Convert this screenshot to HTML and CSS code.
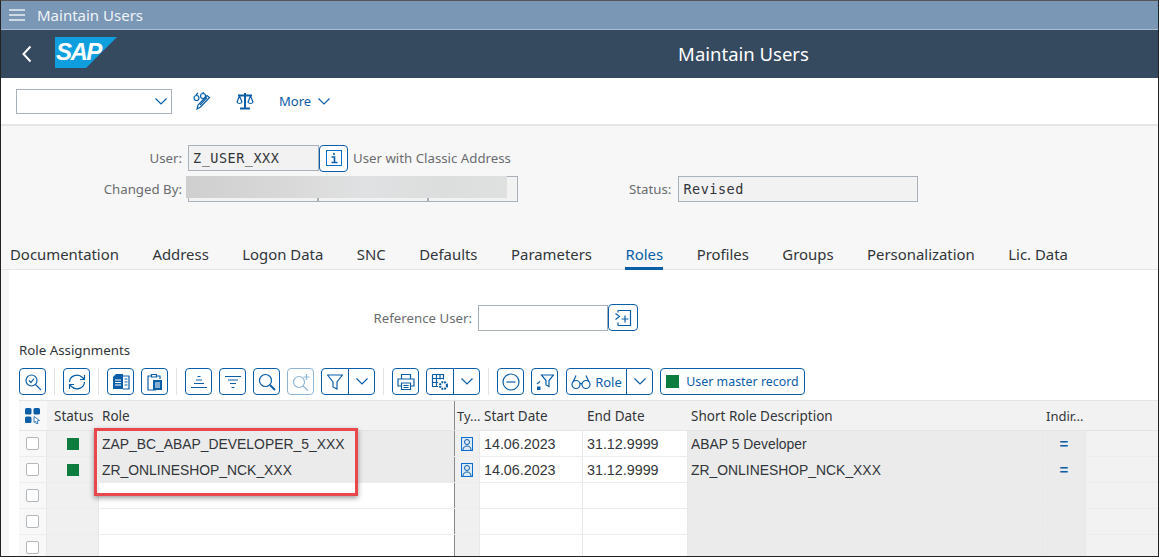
FILE: index.html
```html
<!DOCTYPE html>
<html lang="en">

<head>
    <meta charset="UTF-8">
    <title>Maintain Users</title>
    <link rel="stylesheet" href="styles.css">
</head>

<body>
    <div class="shell-bar">
        <svg class="menu-icon" width="16" height="12" viewBox="0 0 16 12"><path d="M0 1h16M0 6h16M0 11h16" stroke="#fff" stroke-width="1.5" opacity=".85"/></svg>
        <span>Maintain Users</span>
    </div>

    <div class="app-header">
        <svg class="back-icon" width="12" height="18" viewBox="0 0 12 18"><path d="M9.500 1.500 2.500 9l7 7.500" fill="none" stroke="#fff" stroke-width="2"/></svg>
        <div class="sap-logo"><span>SAP</span></div>
        <div class="app-title">Maintain Users</div>
    </div>

    <div class="action-bar">
        <div class="combo">
            <svg width="12" height="7" viewBox="0 0 12 7"><path d="M.5.500 6 6l5.500-5.500" class="line"/></svg>
        </div>
        <svg class="action-icon first" width="18" height="18" viewBox="0 0 18 18"><circle cx="3.500" cy="6" r="2.500" class="line"/><circle cx="10" cy="4" r="2.500" class="line"/><path d="M3 3 5 1M9 1.500 11 .5" class="line"/><path d="M16.500 5.500 7.500 15 4 17l1-4 9-9.500z" class="line"/><path d="M14 5.500 7 13" class="line"/></svg>
        <svg class="action-icon" width="18" height="18" viewBox="0 0 18 18"><path d="M9 1v15" class="line heavy"/><path d="M4 16.500h10M2 3.500h14" class="line heavy"/><path d="M3.500 4 1 10c1 2 4 2 5 0zM14.500 4 12 10c1 2 4 2 5 0z" class="line"/></svg>
        <span class="more">More</span>
        <svg width="12" height="7" viewBox="0 0 12 7"><path d="M.5.500 6 6l5.500-5.500" class="line"/></svg>
    </div>

    <div class="object-header">
        <div class="form-row">
            <label class="form-label">User:</label>
            <div class="field mono user-field">Z_USER_XXX</div>
            <button class="btn info-btn"><svg width="16" height="16" viewBox="0 0 16 16"><rect x=".5" y=".5" width="15" height="15" fill="#fff" stroke="#0a6ed1"/><path d="M8 3v2M5.500 7H8.500v5.500M5.500 12.500h6" stroke="#0a5ea8" stroke-width="1.600" fill="none"/></svg></button>
            <span class="form-label note">User with Classic Address</span>
        </div>
        <div class="form-row second">
            <label class="form-label">Changed By:</label>
            <div class="field changed-a"></div>
            <div class="field changed-b"></div>
            <div class="field changed-c"></div>
            <label class="form-label status-label">Status:</label>
            <div class="field mono status-field">Revised</div>
        </div>
        <div class="blur-box"></div>
    </div>

    <div class="tabs">
        <span>Documentation</span>
        <span>Address</span>
        <span>Logon Data</span>
        <span>SNC</span>
        <span>Defaults</span>
        <span>Parameters</span>
        <span class="tab-active">Roles</span>
        <span>Profiles</span>
        <span>Groups</span>
        <span>Personalization</span>
        <span>Lic. Data</span>
    </div>

    <div class="content">
        <div class="ref-row">
            <label class="form-label">Reference User:</label>
            <div class="field ref-field"></div>
            <button class="btn ref-btn"><svg width="18" height="18" viewBox="0 0 18 18"><path d="M4 1.500h12.500v15H4M4 16.500v-3M4 1.500v2M1.500 4.500l4 3-4 3M7.500 10h7M11 6.500v7" class="line"/></svg></button>
        </div>

        <div class="section-title">Role Assignments</div>

        <div class="toolbar">
            <button class="btn tool"><svg width="18" height="18" viewBox="0 0 18 18"><circle cx="7.500" cy="7.500" r="5.500" class="line"/><path d="M11.500 11.500 17 17M5 7.500 7 9.500 10 5.500" class="line"/></svg></button>
            <i class="sep"></i>
            <button class="btn tool"><svg width="20" height="18" viewBox="0 0 20 18"><path d="M2.500 9a7.500 7 0 0 1 13-4.500L17 6M17.500 9a7.500 7 0 0 1-13 4.500L3 12M17.500 2v4.500H13M2.500 16v-4.500H7" class="line"/></svg></button>
            <i class="sep"></i>
            <button class="btn tool"><svg width="18" height="18" viewBox="0 0 18 18"><path d="M11 3h6v13h-6" class="line"/><path d="M1 4l3-3h7v15H1z" fill="#0a5ea8"/><path d="M3 7h6M3 9.500h6M3 12h6" stroke="#fff"/><path d="M12.500 6h3M12.500 9h3M12.500 12h3" class="line"/></svg></button>
            <button class="btn tool"><svg width="18" height="18" viewBox="0 0 18 18"><path d="M5 3H2v14h8M11 3h3v3M5.500 1.500h5V4h-5z" class="line"/><path d="M7 7h9v10H7z" fill="#0a5ea8"/><path d="M9 10h5M9 12h5M9 14h5" stroke="#fff"/></svg></button>
            <i class="sep"></i>
            <button class="btn tool"><svg width="18" height="14" viewBox="0 0 18 14"><path d="M7.500 1.500h3M6 5h6M4 8.500h10M1 12.500h16" class="line"/></svg></button>
            <button class="btn tool"><svg width="18" height="14" viewBox="0 0 18 14"><path d="M1 1.500h16M4 5h10M6 8.500h6M7.500 12.500h3" class="line"/></svg></button>
            <button class="btn tool"><svg width="18" height="18" viewBox="0 0 18 18"><circle cx="7.500" cy="7.500" r="6" class="line"/><path d="M12 12l5 5" class="line heavy"/></svg></button>
            <button class="btn tool off"><svg width="18" height="18" viewBox="0 0 18 18"><circle cx="7" cy="9" r="5.500" class="line"/><path d="M11 13l5 4.500M14.500 1v6M11.500 4h6" class="line"/></svg></button>
            <div class="split">
                <button class="btn-part square"><svg width="16" height="16" viewBox="0 0 16 16"><path d="M.5 1h15L10 8v7l-4-2V8z" class="line"/></svg></button>
                <button class="btn-part arrow"><svg width="12" height="7" viewBox="0 0 12 7"><path d="M.5.500 6 6l5.500-5.500" class="line"/></svg></button>
            </div>
            <i class="sep"></i>
            <button class="btn tool"><svg width="18" height="18" viewBox="0 0 18 18"><path d="M4.500 6V1.500h9V6M4 13H1V6h16v7h-3M4.500 10h9v6.500h-9zM6.500 12.500h5M6.500 14.500h5" class="line"/></svg></button>
            <div class="split">
                <button class="btn-part square"><svg width="18" height="18" viewBox="0 0 18 18"><path d="M1.500 1.500h11v5M1.500 1.500v12H7M1.500 5.500H12M1.500 9.500H7M5.500 1.500v12M9 1.500v5" class="line"/><circle cx="12.500" cy="12.500" r="3.500" fill="none" stroke="#0a5ea8" stroke-width="2.200" stroke-dasharray="1.800 1"/></svg></button>
                <button class="btn-part arrow"><svg width="12" height="7" viewBox="0 0 12 7"><path d="M.5.500 6 6l5.500-5.500" class="line"/></svg></button>
            </div>
            <i class="sep"></i>
            <button class="btn tool"><svg width="18" height="18" viewBox="0 0 18 18"><circle cx="9" cy="9" r="8" class="line"/><path d="M4.500 9h9" class="line"/></svg></button>
            <button class="btn tool"><svg width="18" height="18" viewBox="0 0 18 18"><path d="M5.500 2h12l-4.500 5.500v6l-3-1.500V7.500z" class="line"/><path d="M1 11l3-2.500" class="line"/><path d="M1 13.500h3.500V17H1z" fill="#0a5ea8"/></svg></button>
            <div class="split role-split">
                <button class="btn-part role-part"><svg width="20" height="16" viewBox="0 0 20 16"><circle cx="5" cy="10.500" r="4" class="line"/><circle cx="15" cy="10.500" r="4" class="line"/><path d="M2 8l3-6.500M18 8l-3-6.500M9 10c1-1 1-1 2 0" class="line"/></svg><span>Role</span></button>
                <button class="btn-part arrow"><svg width="12" height="7" viewBox="0 0 12 7"><path d="M.5.500 6 6l5.500-5.500" class="line"/></svg></button>
            </div>
            <button class="btn master-btn"><i class="led"></i><span>User master record</span></button>
        </div>

        <div class="table-wrap">
            <div class="grid-row head">
                <div class="cell sel"><svg width="16" height="16" viewBox="0 0 16 16"><rect width="6.500" height="6.500" rx="1.500" fill="#0a5ea8"/><rect x="8.500" width="6.500" height="6.500" rx="1.500" fill="#0a5ea8"/><rect y="8.500" width="6.500" height="6.500" rx="1.500" fill="#0a5ea8"/><path d="M9 8.500l5.500 4-2.500.5 1 2.500-1.500.5-1-2.500-1.500 1z" fill="#fff" stroke="#0a5ea8" stroke-width=".8"/></svg></div>
                <div class="cell status">Status</div>
                <div class="cell role">Role</div>
                <div class="cell type">Ty...</div>
                <div class="cell date">Start Date</div>
                <div class="cell date end">End Date</div>
                <div class="cell desc">Short Role Description</div>
                <div class="cell indir">Indir...</div>
                <div class="cell rest"></div>
            </div>

            <div class="grid-row filled">
                <div class="cell sel"><i class="check"></i></div>
                <div class="cell status center"><i class="led"></i></div>
                <div class="cell role">ZAP_BC_ABAP_DEVELOPER_5_XXX</div>
                <div class="cell type center"><svg width="12" height="14" viewBox="0 0 12 14"><rect x=".5" y=".5" width="11" height="13" fill="#dbe9f6" stroke="#0a6ed1"/><circle cx="6" cy="5" r="2.500" fill="none" stroke="#0a5ea8"/><path d="M2 13c0-3 2-4 4-4s4 1 4 4" fill="none" stroke="#0a5ea8"/></svg></div>
                <div class="cell date">14.06.2023</div>
                <div class="cell date end">31.12.9999</div>
                <div class="cell desc">ABAP 5 Developer</div>
                <div class="cell indir center"><b class="equal">=</b></div>
                <div class="cell rest"></div>
            </div>
            <div class="grid-row filled">
                <div class="cell sel"><i class="check"></i></div>
                <div class="cell status center"><i class="led"></i></div>
                <div class="cell role">ZR_ONLINESHOP_NCK_XXX</div>
                <div class="cell type center"><svg width="12" height="14" viewBox="0 0 12 14"><rect x=".5" y=".5" width="11" height="13" fill="#dbe9f6" stroke="#0a6ed1"/><circle cx="6" cy="5" r="2.500" fill="none" stroke="#0a5ea8"/><path d="M2 13c0-3 2-4 4-4s4 1 4 4" fill="none" stroke="#0a5ea8"/></svg></div>
                <div class="cell date">14.06.2023</div>
                <div class="cell date end">31.12.9999</div>
                <div class="cell desc">ZR_ONLINESHOP_NCK_XXX</div>
                <div class="cell indir center"><b class="equal">=</b></div>
                <div class="cell rest"></div>
            </div>
            <div class="grid-row">
                <div class="cell sel"><i class="check"></i></div>
                <div class="cell status"></div>
                <div class="cell role"></div>
                <div class="cell type"></div>
                <div class="cell date"></div>
                <div class="cell date end"></div>
                <div class="cell desc"></div>
                <div class="cell indir"></div>
                <div class="cell rest"></div>
            </div>
            <div class="grid-row">
                <div class="cell sel"><i class="check"></i></div>
                <div class="cell status"></div>
                <div class="cell role"></div>
                <div class="cell type"></div>
                <div class="cell date"></div>
                <div class="cell date end"></div>
                <div class="cell desc"></div>
                <div class="cell indir"></div>
                <div class="cell rest"></div>
            </div>
            <div class="grid-row">
                <div class="cell sel"><i class="check"></i></div>
                <div class="cell status"></div>
                <div class="cell role"></div>
                <div class="cell type"></div>
                <div class="cell date"></div>
                <div class="cell date end"></div>
                <div class="cell desc"></div>
                <div class="cell indir"></div>
                <div class="cell rest"></div>
            </div>
            <div class="red-box"></div>
        </div>
    </div>
</body>

</html>
```

FILE: styles.css
```css
* {
    box-sizing: border-box;
}

html,
body {
    height: 557px;
    overflow: hidden;
}

body {
    margin: 0;
    font-family: 'Noto Sans', 'Open Sans', sans-serif;
    color: #32363a;
    background: #fff;
    border: 1px solid #222;
    border-top-color: #555;
    position: relative;
}

.line {
    fill: none;
    stroke: #0a5ea8;
    stroke-width: 1.2;
}

.line.heavy {
    stroke-width: 2;
}

.shell-bar {
    height: 29px;
    background: #7a97b5;
    border-bottom: 1px solid #a9bdd2;
    color: #f0f4f8;
    font-size: 15px;
    display: flex;
    align-items: center;
    padding-left: 8px;
    gap: 12px;
}

.app-header {
    height: 48px;
    background: #354a5f;
    display: flex;
    align-items: center;
    position: relative;
    padding-left: 20px;
}

.sap-logo {
    width: 62px;
    height: 31px;
    margin-left: 22px;
    margin-top: -3px;
    background: #0f9fdf;
    clip-path: polygon(0 0, 100% 0, 50% 100%, 0 100%);
    color: #fff;
    font: italic bold 24px/30px 'Liberation Sans', sans-serif;
    letter-spacing: -1.500px;
    padding-left: 1px;
}

.app-title {
    position: absolute;
    left: 0;
    right: 0;
    top: 11px;
    padding-left: 328px;
    text-align: center;
    color: #fff;
    font-size: 18.500px;
}

.action-bar {
    height: 48px;
    display: flex;
    align-items: center;
    padding: 0 0 0 15px;
    border-bottom: 2px solid #e6e6e6;
    color: #0a5ea8;
}

.combo {
    width: 156px;
    height: 25px;
    border: 1px solid #a9b1ba;
    background: #fff;
    display: flex;
    align-items: center;
    justify-content: flex-end;
    padding-right: 4px;
}

.action-icon {
    margin-right: 25px;
}

.action-icon.first {
    margin-left: 21px;
}

.more {
    font-size: 13px;
    margin: 0 7px 0 0;
}

.object-header {
    height: 111px;
    background: #f7f7f7;
    padding-top: 19px;
    position: relative;
    font-size: 13px;
}

.form-row {
    display: flex;
    align-items: center;
    height: 26px;
}

.form-row.second {
    margin-top: 5px;
}

.form-label {
    color: #6a6d70;
    font-size: 13.250px;
}

.form-row > .form-label:first-child {
    width: 181px;
    text-align: right;
    margin-right: 6px;
}

.field {
    height: 26px;
    border: 1px solid #a9b1ba;
    background: #f2f2f2;
}

.mono {
    font-family: 'DejaVu Sans Mono', monospace;
    font-size: 13.500px;
    line-height: 25px;
    padding-left: 4px;
    letter-spacing: .5px;
}

.user-field {
    width: 131px;
}

.changed-a {
    width: 130px;
}

.changed-b {
    width: 110px;
}

.changed-c {
    width: 90px;
}

.status-label {
    margin-left: 111px;
    margin-right: 7px;
}

.status-field {
    width: 240px;
}

.btn {
    background: #fff;
    border: 1px solid #0a5ea8;
    border-radius: 4px;
    padding: 0;
    display: inline-flex;
    align-items: center;
    justify-content: center;
}

.info-btn {
    width: 29px;
    height: 27px;
    margin-right: 5px;
}

.blur-box {
    position: absolute;
    left: 185px;
    top: 50px;
    width: 321px;
    height: 22px;
    background: linear-gradient(to right, #cfcfcf, #d8d8d8 30%, #e0e1e2 55%, #dcdddd 80%, #dfe0e0);
}

.tabs {
    height: 33px;
    background: #f7f7f7;
    border-bottom: 1px solid #e5e5e5;
    display: flex;
    padding-left: 9px;
    gap: 33.500px;
    font-size: 14.900px;
    line-height: 35px;
    color: #32363a;
}

.tab-active {
    color: #0a5ea8;
    border-bottom: 3px solid #0a5ea8;
    height: 33px;
}

.content {
    background: #fff;
    margin-left: 8px;
    box-shadow: -8px 0 0 #f7f7f7;
    height: 286px;
    padding: 34px 0 0 10px;
}

.ref-row {
    display: flex;
    align-items: center;
    height: 27px;
}

.ref-row .form-label {
    width: 453px;
    text-align: right;
    margin-right: 6px;
    font-size: 13.250px;
}

.ref-field {
    width: 130px;
    background: #fff;
}

.ref-btn {
    width: 30px;
    height: 27px;
}

.section-title {
    margin-top: 11px;
    font-size: 13.300px;
    line-height: 17px;
}

.toolbar {
    display: flex;
    align-items: center;
    height: 27px;
    margin-top: 9px;
    gap: 7px;
}

.tool {
    width: 27px;
    height: 27px;
}

.tool.off {
    opacity: .45;
}

.sep {
    width: 1px;
    height: 27px;
    background: #e2e2e2;
    margin: 0 1px;
}

.split {
    display: flex;
    height: 27px;
    border: 1px solid #0a5ea8;
    border-radius: 4px;
    background: #fff;
    overflow: hidden;
}

.role-split {
    margin-left: 1px;
}

.btn-part {
    background: none;
    border: 0;
    padding: 0;
    height: 25px;
    display: flex;
    align-items: center;
    justify-content: center;
    color: #0a5ea8;
    font: 13px 'Noto Sans', sans-serif;
}

.btn-part.square {
    width: 26px;
}

.btn-part.arrow {
    width: 26px;
    border-left: 1px solid #0a5ea8;
}

.btn-part.role-part {
    width: 59px;
    gap: 4px;
}

.master-btn {
    width: 145px;
    height: 27px;
    color: #0a5ea8;
    font: 12.400px 'Noto Sans', sans-serif;
    gap: 7px;
}

.led {
    display: inline-block;
    width: 12px;
    height: 12px;
    background: #0f7c3f;
}

.master-btn .led {
    width: 13px;
    height: 13px;
}

.table-wrap {
    position: relative;
    margin-top: 5px;
    font: 13.900px 'Liberation Sans', Arial, sans-serif;
}

.grid-row {
    display: grid;
    grid-template-columns: 28px 52px 356px 25px 103px 105px 355px 43px 1fr;
    height: 26px;
    border-bottom: 1px solid #ececec;
}

.grid-row.head {
    height: 31px;
    background: #f2f2f2;
    border-top: 1px solid #e4e4e4;
    border-bottom: 1px solid #e4e4e4;
    font-family: 'Noto Sans', sans-serif;
    font-size: 13.500px;
}

.grid-row.head .cell {
    background: transparent;
    border-right: 0;
}

.grid-row.head .cell.sel,
.cell.sel {
    background: #f8f8f8;
}

.cell {
    display: flex;
    align-items: center;
    padding-left: 3px;
    white-space: nowrap;
    overflow: hidden;
    border-right: 1px solid #e8e8e8;
}

.cell.center {
    justify-content: center;
    padding-left: 0;
}

.cell.sel {
    justify-content: center;
    padding-left: 0;
}

.cell.status {
    background: #f0f0f0;
}

.grid-row.head .cell.status {
    padding-left: 7px;
}

.filled .cell.role {
    background: #ebebeb;
}

.cell.role,
.grid-row.head .cell.role {
    border-right: 1px solid #8a8a8a;
}

.cell.type {
    background: #f0f0f0;
}

.grid-row.head .cell.type {
    padding-left: 2px;
    font-size: 13px;
}

.cell.desc,
.cell.indir {
    background: #ebebeb;
}

.grid-row.head .cell.indir {
    font-size: 13px;
}

.cell.rest {
    background: #f2f2f2;
    border-right: 0;
}

.cell.date {
    padding-left: 4px;
    font-size: 14.300px;
}

.grid-row.head .cell.date {
    font-size: 13.500px;
}

.check {
    display: block;
    width: 13px;
    height: 13px;
    background: #fff;
    border: 1px solid #b3b8bd;
    border-radius: 2px;
}

.equal {
    color: #0a5ea8;
    font-size: 15px;
}

.red-box {
    position: absolute;
    left: 75px;
    top: 28px;
    width: 264px;
    height: 68px;
    border: 3px solid #e8474c;
    box-shadow: 0 2px 5px rgba(0, 0, 0, .4);
}
```
